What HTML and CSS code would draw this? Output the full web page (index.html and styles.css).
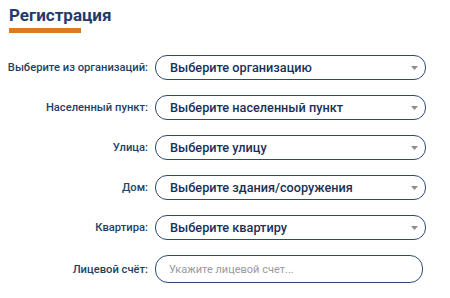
FILE: index.html
```html
<!DOCTYPE html>
<html lang="ru">
<head>
<meta charset="utf-8">
<link rel="stylesheet" href="styles.css">
</head>
<body>
<div class="page">
  <div class="header">
    <h1 class="title">Регистрация</h1>
    <div class="bar"></div>
  </div>
  <div class="form">
    <div class="label">Выберите из организаций:</div>
    <div class="select"><span>Выберите организацию</span><svg class="arrow" width="7" height="4" viewBox="0 0 7 4"><path d="M0 0H7L3.5 4Z" fill="#8c8c8c"/></svg></div>
    <div class="label">Населенный пункт:</div>
    <div class="select"><span>Выберите населенный пункт</span><svg class="arrow" width="7" height="4" viewBox="0 0 7 4"><path d="M0 0H7L3.5 4Z" fill="#8c8c8c"/></svg></div>
    <div class="label">Улица:</div>
    <div class="select"><span>Выберите улицу</span><svg class="arrow" width="7" height="4" viewBox="0 0 7 4"><path d="M0 0H7L3.5 4Z" fill="#8c8c8c"/></svg></div>
    <div class="label">Дом:</div>
    <div class="select"><span>Выберите здания/сооружения</span><svg class="arrow" width="7" height="4" viewBox="0 0 7 4"><path d="M0 0H7L3.5 4Z" fill="#8c8c8c"/></svg></div>
    <div class="label">Квартира:</div>
    <div class="select"><span>Выберите квартиру</span><svg class="arrow" width="7" height="4" viewBox="0 0 7 4"><path d="M0 0H7L3.5 4Z" fill="#8c8c8c"/></svg></div>
    <div class="label">Лицевой счёт:</div>
    <div class="input-wrap"><input class="input" type="text" placeholder="Укажите лицевой счет..."></div>
  </div>
</div>
</body>
</html>
```
FILE: styles.css
```css
html, body {
  margin: 0;
  padding: 0;
  background: #ffffff;
}
.page {
  font-family: Roboto, "Liberation Sans", sans-serif;
  width: 450px;
  height: 298px;
  overflow: hidden;
}
.header {
  padding: 4px 0 0 9px;
}
.title {
  margin: 0;
  font-size: 17px;
  line-height: 22px;
  font-weight: 700;
  color: #1f3b6b;
}
.bar {
  margin-top: 2px;
  width: 72px;
  height: 5px;
  background: #d97b25;
}
.form {
  margin-top: 22px;
  display: grid;
  grid-template-columns: 148px 271px;
  column-gap: 7px;
  row-gap: 15px;
  align-items: center;
}
.label {
  text-align: right;
  font-size: 11.2px;
  font-weight: 500;
  color: #243f63;
  white-space: nowrap;
}
.select {
  box-sizing: border-box;
  height: 25px;
  border: 1px solid #2d4a70;
  border-radius: 12px;
  display: flex;
  align-items: center;
  justify-content: space-between;
  padding: 0 7px 0 14px;
  font-size: 12.7px;
  font-weight: 500;
  color: #1b3058;
}
.arrow {
  display: block;
}
.input-wrap {
  display: flex;
}
.input {
  box-sizing: border-box;
  width: 268px;
  height: 28px;
  border: 1px solid #2d4a70;
  border-radius: 13px;
  padding: 0 13px;
  font-family: Roboto, "Liberation Sans", sans-serif;
  font-size: 11px;
  color: #333;
  outline: none;
  background: #fff;
}
.input::placeholder {
  color: #9a9a9a;
}
```
